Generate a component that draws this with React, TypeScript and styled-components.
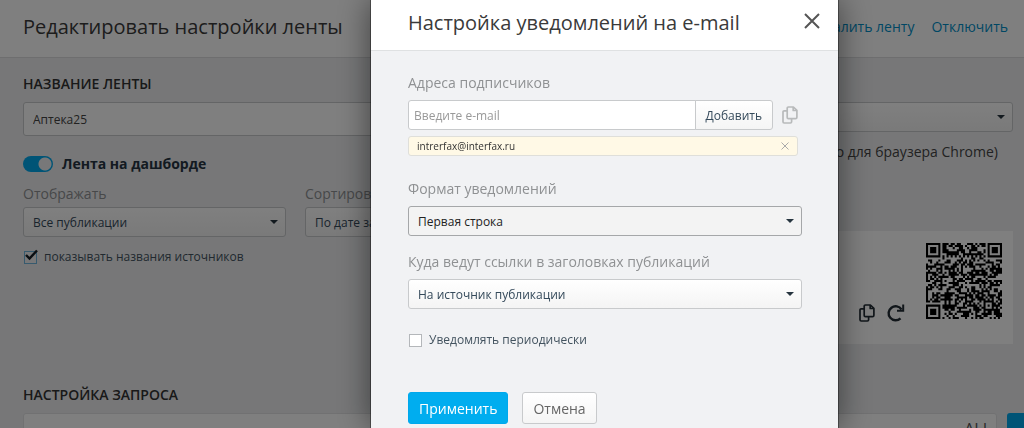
import React from 'react';
import styled, { createGlobalStyle, css } from 'styled-components';

const Global = createGlobalStyle`
  * { box-sizing: border-box; }
  html, body, #root { height: 100%; }
  body { margin: 0; overflow: hidden; background: #eeeff1; font-family: "Open Sans", "Noto Sans", sans-serif; font-size: 14px; color: #333; }
  input, select, button { font-family: inherit; }
`;

const line = '#c8cacc';

const Page = styled.div`
  height: 100%;
  overflow: hidden;
`;

const PageHeader = styled.header`
  display: flex;
  align-items: center;
  justify-content: space-between;
  height: 58px;
  padding: 0 16px 4px 23px;
  background: #fff;
  border-bottom: 1px solid #dcdddf;
`;

const Title = styled.h1`
  margin: 0;
  font-size: 20px;
  line-height: 28px;
  font-weight: 400;
  color: #3a3a3a;
`;

const Links = styled.nav`
  display: flex;
  gap: 17px;
`;

const Link = styled.a`
  font-size: 14px;
  line-height: 20px;
  color: #008fc9;
  text-decoration: none;
`;

const Columns = styled.div`
  display: grid;
  grid-template-columns: 545px 1fr;
  gap: 19px;
  height: 313px;
  padding: 16px 11px 0 23px;
`;

const Column = styled.div`
  display: flex;
  flex-direction: column;
`;

const SectionTitle = styled.h2`
  margin: 0 0 8px;
  font-size: 14px;
  line-height: 20px;
  font-weight: 600;
  color: #333;
  text-transform: uppercase;
`;

const TextInput = styled.input`
  width: 100%;
  height: 34px;
  padding: 0 9px;
  border: 1px solid ${line};
  border-radius: 3px;
  background: #fff;
  font-size: 12px;
  color: #444;
`;

const SelectBox = styled.div`
  position: relative;
  display: flex;
  color: #26343f;

  &::after {
    content: '';
    position: absolute;
    right: 8px;
    top: 50%;
    margin-top: -2px;
    border: 4px solid transparent;
    border-top-color: currentColor;
    border-bottom: 0;
    pointer-events: none;
  }
`;

const Select = styled.select<{ $active?: boolean }>`
  appearance: none;
  width: 100%;
  height: 30px;
  padding: 0 24px 0 9px;
  border: 1px solid ${line};
  border-radius: 3px;
  background: linear-gradient(#fff, #f4f4f4);
  font-size: 12px;
  color: #34495a;
  ${p => p.$active && css`
    border-color: #a5a7a9;
    background: #f3f3f3;
    color: #222;
  `}
`;

const SwitchLabel = styled.label`
  display: flex;
  align-items: center;
  gap: 9px;
  margin-top: 18px;
  font-size: 14px;
  line-height: 20px;
  font-weight: 700;
  color: #263442;
`;

const Switch = styled.input`
  appearance: none;
  width: 30px;
  height: 16px;
  margin: 0;
  border-radius: 8px;
  background: radial-gradient(circle at 22px 8px, #f0f1f3 6px, #00a8ec 7px);
`;

const Pair = styled.div`
  display: grid;
  grid-template-columns: 1fr 1fr;
  gap: 19px;
  margin-top: 10px;
`;

const FieldLabel = styled.label`
  display: block;
  margin-bottom: 3px;
  font-size: 14px;
  line-height: 20px;
  color: #8f9193;
`;

const CheckLabel = styled.label`
  display: flex;
  align-items: center;
  gap: 7px;
  font-size: 12px;
  line-height: 20px;
  color: #43535f;
`;

const Check = styled.input`
  appearance: none;
  width: 13px;
  height: 13px;
  margin: 0 0 0 1px;
  border: 1px solid #b4b7ba;
  background: #fff;
`;

const TickedCheck = styled.span`
  position: relative;
  display: flex;

  svg {
    position: absolute;
    left: 2px;
    top: -2px;
    pointer-events: none;
  }

  input {
    border-color: #6fb4dc;
    background: #f0f1f3;
  }
`;

const ChromeNote = styled.p`
  margin: 10px 15px 0 0;
  font-size: 14px;
  line-height: 20px;
  text-align: right;
  color: #444;
`;

const QrCard = styled.div`
  display: flex;
  justify-content: flex-end;
  align-items: flex-end;
  gap: 13px;
  height: 113px;
  margin-top: 69px;
  padding: 12px 11px;
  background: #fff;
`;

const IconButton = styled.button`
  display: flex;
  padding: 0;
  border: 0;
  background: none;
  color: #222c34;
`;

const QrTools = styled.div`
  display: flex;
  gap: 12px;
  padding-bottom: 10px;
  margin-right: 8px;
`;

const QrSlot = styled.div`
  align-self: flex-start;
`;

const Query = styled.section`
  padding: 14px 0 0 23px;
`;

const QueryRow = styled.div`
  display: flex;
  gap: 10px;
`;

const QueryBox = styled.div`
  flex: 1;
  height: 60px;
  padding: 5px;
  border: 1px solid #e2e3e5;
  border-radius: 3px;
  background: #fff;
  font-size: 16px;
  line-height: 20px;
  text-align: right;
  color: #555;
`;

const QueryButton = styled.button`
  width: 17px;
  height: 60px;
  border: 0;
  border-radius: 3px 0 0 3px;
  background: #00a8ec;
`;

const Overlay = styled.div`
  position: fixed;
  inset: 0;
  display: flex;
  padding: 0 185px 0 370px;
  background: rgba(0, 0, 0, 0.5);
`;

const Dialog = styled.section`
  flex: 1;
  border: solid rgba(0, 0, 0, 0.35);
  border-width: 0 1px;
  background: #f1f2f4;
  background-clip: padding-box;
  box-shadow: 0 0 30px rgba(0, 0, 0, 0.5);
`;

const DialogHeader = styled.header`
  display: flex;
  align-items: center;
  justify-content: space-between;
  height: 51px;
  padding: 0 18px 4px 37px;
  border-bottom: 1px solid #dfe1e2;
  background: #fff;
`;

const CloseButton = styled(IconButton)`
  margin-top: -4px;
  color: #555;
`;

const Form = styled.form`
  padding: 22px 36px 22px 37px;

  ${FieldLabel} { margin-bottom: 7px; }
`;

const AddRow = styled.div`
  display: flex;
  align-items: center;

  input {
    flex: 1;
    min-width: 0;
    height: 30px;
    padding: 0 5px;
    border-radius: 3px 0 0 3px;
  }

  input::placeholder { color: #999; opacity: 1; }
`;

const Button = styled.button<{ $kind?: 'primary' | 'joined' }>`
  height: 32px;
  padding: 0 10px;
  border: 1px solid ${line};
  border-radius: 3px;
  background: linear-gradient(#fff, #f5f5f5);
  font-size: 14px;
  color: #666;
  ${p => p.$kind === 'primary' && css`
    border-color: #00a8ec;
    background: #00adef;
    color: #fff;
  `}
  ${p => p.$kind === 'joined' && css`
    height: 30px;
    margin-left: -1px;
    border-radius: 0 3px 3px 0;
    font-size: 12px;
    color: #34495a;
  `}
`;

const CopyButton = styled(IconButton)`
  margin: 0 4px 0 9px;
  color: #b8babb;
`;

const RemoveButton = styled(IconButton)`
  color: #aaa;
`;

const Subscriber = styled.div`
  display: flex;
  align-items: center;
  justify-content: space-between;
  height: 20px;
  margin: 6px 4px 0 0;
  padding: 0 8px;
  border: 1px solid #dfdfda;
  border-radius: 3px;
  background: #fff9e6;
  font-size: 10px;
  line-height: 16px;
  color: #333;
`;

const Group = styled.div<{ $top: number }>`
  margin-top: ${p => p.$top}px;
`;

const Actions = styled.div`
  display: flex;
  gap: 14px;
  margin-top: 42px;
`;

const CopyIcon = () => (
  <svg width="16" height="18" viewBox="0 0 16 18" fill="none" stroke="currentColor" strokeWidth="1.7" strokeLinejoin="round">
    <path d="M6.4 1H11.4L14.9 4.300V11.300Q14.900 12.700 13.500 12.700H6.400Q5.200 12.700 5.200 11.500V2.200Q5.200 1 6.400 1Z" />
    <path d="M11.200 1V4.500H14.800M5 4.800H2.200Q1 4.800 1 6V15.800Q1 17 2.200 17H8.400Q9.600 17 9.600 15.800V12.900" />
  </svg>
);

const CrossIcon = ({ size, width }: { size: number; width: number }) => (
  <svg width={size} height={size} viewBox="0 0 16 16" fill="none" stroke="currentColor" strokeWidth={width}>
    <path d="M1 1L15 15M15 1L1 15" />
  </svg>
);

const QR_SIZE = 37;

const finder = (x: number, y: number, cx: number, cy: number) => {
  const d = Math.max(Math.abs(x - cx), Math.abs(y - cy));
  return d > 4 ? null : d === 3 || d <= 1;
};

const qrModule = (x: number, y: number) => {
  for (const [cx, cy] of [[3, 3], [33, 3], [3, 33]]) {
    const f = finder(x, y, cx, cy);
    if (f !== null) return f;
  }
  const d = Math.max(Math.abs(x - 30), Math.abs(y - 30));
  if (d <= 2) return d !== 1;
  if (x === 6 || y === 6) return (x + y) % 2 === 0;
  let h = Math.imul(x + 11, 374761393) ^ Math.imul(y + 7, 668265263);
  h = Math.imul(h ^ (h >>> 13), 1274126177);
  return ((h ^ (h >>> 16)) & 255) < 138;
};

const qrPath = Array.from({ length: QR_SIZE * QR_SIZE }, (_, i) => [i % QR_SIZE, Math.floor(i / QR_SIZE)])
  .filter(([x, y]) => qrModule(x, y))
  .map(([x, y]) => `M${x} ${y}h1v1h-1z`)
  .join('');

const QrCode = () => (
  <svg width="76" height="76" viewBox={`0 0 ${QR_SIZE} ${QR_SIZE}`} role="img" aria-label="QR">
    <path d={qrPath} fill="#000" />
  </svg>
);

type DropProps = { id: string; value: string; active?: boolean; label?: string };

const Drop = ({ id, value, active, label }: DropProps) => (
  <SelectBox>
    <Select id={id} $active={active} aria-label={label}>
      <option>{value}</option>
    </Select>
  </SelectBox>
);

export default function App() {
  return (
    <>
      <Global />
      <Page>
        <PageHeader>
          <Title>Редактировать настройки ленты</Title>
          <Links>
            <Link href="#delete">Удалить ленту</Link>
            <Link href="#off">Отключить</Link>
          </Links>
        </PageHeader>
        <Columns>
          <Column>
            <SectionTitle as="label" htmlFor="name">Название ленты</SectionTitle>
            <TextInput id="name" defaultValue="Аптека25" />
            <SwitchLabel>
              <Switch type="checkbox" role="switch" defaultChecked />
              Лента на дашборде
            </SwitchLabel>
            <Pair>
              <div>
                <FieldLabel htmlFor="show">Отображать</FieldLabel>
                <Drop id="show" value="Все публикации" />
              </div>
              <div>
                <FieldLabel htmlFor="sort">Сортировать</FieldLabel>
                <Drop id="sort" value="По дате загрузки" />
              </div>
            </Pair>
            <Group $top={10}>
              <CheckLabel>
                <TickedCheck>
                  <Check type="checkbox" defaultChecked />
                  <svg width="13" height="12" viewBox="0 0 13 12" fill="none" stroke="#141d24" strokeWidth="2.4">
                    <path d="M1 6L4.5 9.5L12 1.5" />
                  </svg>
                </TickedCheck>
                показывать названия источников
              </CheckLabel>
            </Group>
          </Column>
          <Column>
            <Group $top={28}>
              <Drop id="group" value="" label="Группа" />
            </Group>
            <ChromeNote>(только для браузера Chrome)</ChromeNote>
            <QrCard>
              <QrTools>
                <IconButton type="button" aria-label="Копировать"><CopyIcon /></IconButton>
                <IconButton type="button" aria-label="Обновить">
                  <svg width="18" height="18" viewBox="0 0 18 18" fill="none" stroke="currentColor" strokeWidth="2.4">
                    <path d="M13.500 14.300A7 7 0 1 1 14.500 5.500" />
                    <path d="M16.200 0.500V6.800H10" strokeWidth="2" />
                  </svg>
                </IconButton>
              </QrTools>
              <QrSlot><QrCode /></QrSlot>
            </QrCard>
          </Column>
        </Columns>
        <Query>
          <SectionTitle>Настройка запроса</SectionTitle>
          <QueryRow>
            <QueryBox>ALL</QueryBox>
            <QueryButton type="button" aria-label="Найти" />
          </QueryRow>
        </Query>
      </Page>
      <Overlay>
        <Dialog role="dialog" aria-labelledby="dialog-title">
          <DialogHeader>
            <Title as="h2" id="dialog-title">Настройка уведомлений на e-mail</Title>
            <CloseButton type="button" aria-label="Закрыть"><CrossIcon size={16} width={2} /></CloseButton>
          </DialogHeader>
          <Form>
            <FieldLabel htmlFor="email">Адреса подписчиков</FieldLabel>
            <AddRow>
              <TextInput id="email" type="email" placeholder="Введите e-mail" />
              <Button type="button" $kind="joined">Добавить</Button>
              <CopyButton type="button" aria-label="Копировать адреса"><CopyIcon /></CopyButton>
            </AddRow>
            <Subscriber>
              intrerfax@interfax.ru
              <RemoveButton type="button" aria-label="Удалить адрес"><CrossIcon size={8} width={2} /></RemoveButton>
            </Subscriber>
            <Group $top={23}>
              <FieldLabel htmlFor="format">Формат уведомлений</FieldLabel>
              <Drop id="format" value="Первая строка" active />
            </Group>
            <Group $top={16}>
              <FieldLabel htmlFor="target">Куда ведут ссылки в заголовках публикаций</FieldLabel>
              <Drop id="target" value="На источник публикации" />
            </Group>
            <Group $top={21}>
              <CheckLabel>
                <Check type="checkbox" />
                Уведомлять периодически
              </CheckLabel>
            </Group>
            <Actions>
              <Button type="button" $kind="primary">Применить</Button>
              <Button type="button">Отмена</Button>
            </Actions>
          </Form>
        </Dialog>
      </Overlay>
    </>
  );
}
